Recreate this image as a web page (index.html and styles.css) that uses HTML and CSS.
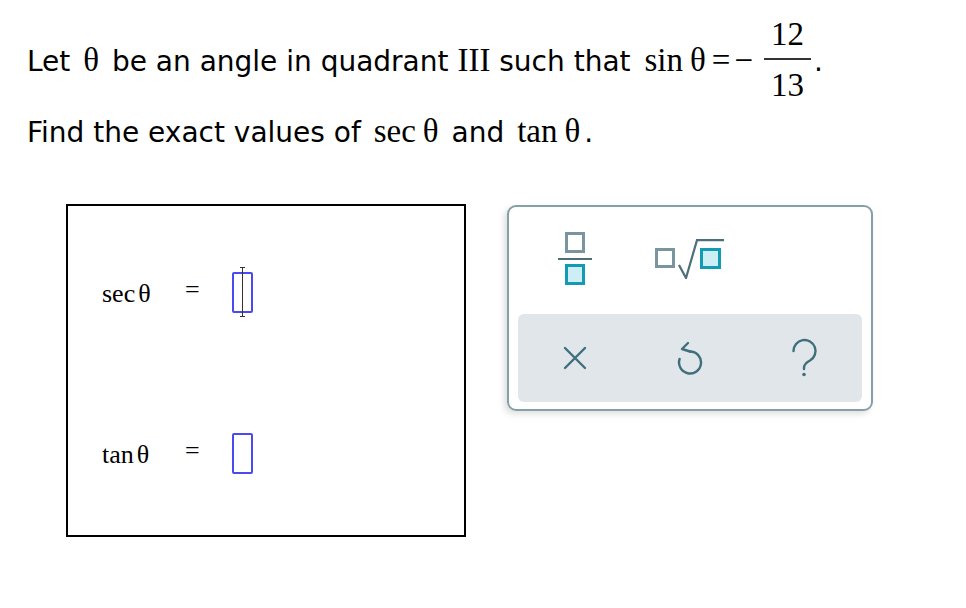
FILE: index.html
```html
<!DOCTYPE html>
<html>
<head>
<meta charset="utf-8">
<link rel="stylesheet" href="styles.css">
</head>
<body>
<div class="page">
  <p class="q q1">Let <span class="m pad">θ</span> be an angle in quadrant <span class="m">III</span> such that <span class="m lead">sin<span class="th">θ</span><span class="op">=</span><span class="op minus">−</span><span class="frac"><span class="num">12</span><span class="bar"></span><span class="den">13</span></span></span>.</p>
  <p class="q q2">Find the exact values of <span class="m pad">sec<span class="th">θ</span></span> and <span class="m pad">tan<span class="th">θ</span></span>.</p>
  <div class="work">
    <div class="answers">
      <div class="row">
        <span class="lbl">sec<span class="th-s">θ</span></span>
        <span class="eq">=</span>
        <span class="slot"><span class="caret"></span></span>
      </div>
      <div class="row">
        <span class="lbl">tan<span class="th-s">θ</span></span>
        <span class="eq">=</span>
        <span class="slot"></span>
      </div>
    </div>
    <div class="keypad">
      <div class="keys-top">
        <div class="key">
          <svg width="34" height="53" viewBox="0 0 34 53">
            <rect x="8.5" y="1.5" width="17" height="18" fill="#fff" stroke="#7a959d" stroke-width="3"/>
            <rect x="0" y="26" width="34" height="2" fill="#4d6f7a"/>
            <rect x="8.5" y="33.5" width="17" height="18" fill="#cdeef4" stroke="#139bb5" stroke-width="3"/>
          </svg>
        </div>
        <div class="key">
          <svg width="70" height="40" viewBox="0 0 70 40">
            <rect x="1.5" y="10.5" width="17" height="17" fill="#fff" stroke="#7a959d" stroke-width="3"/>
            <polyline points="24,26 31,39 42,1.2 69,1.2" fill="none" stroke="#4d6f7a" stroke-width="2.2" stroke-linejoin="miter"/>
            <rect x="46.5" y="10.5" width="18" height="18" fill="#cdeef4" stroke="#139bb5" stroke-width="3"/>
          </svg>
        </div>
        <div class="key"></div>
      </div>
      <div class="keys-bottom">
        <div class="key">
          <svg width="26" height="26" viewBox="0 0 26 26">
            <path d="M3 3 L23 23 M23 3 L3 23" fill="none" stroke="#3f6f7c" stroke-width="2.4" stroke-linecap="round"/>
          </svg>
        </div>
        <div class="key">
          <svg width="28" height="34" viewBox="0 0 28 34">
            <path d="M12 2 L6 8 L14 10.5" fill="none" stroke="#3f6f7c" stroke-width="2.4" stroke-linecap="round" stroke-linejoin="round"/>
            <path d="M14 10.5 A11 11 0 1 1 3.6 18" fill="none" stroke="#3f6f7c" stroke-width="2.4" stroke-linecap="round"/>
          </svg>
        </div>
        <div class="key">
          <svg width="28" height="40" viewBox="0 0 28 40">
            <path d="M2.5 13 A11 11 0 1 1 19 22.5 Q13 25.5 13 30 V31" fill="none" stroke="#3f6f7c" stroke-width="2.4" stroke-linecap="round"/>
            <circle cx="13" cy="36.5" r="1.8" fill="#3f6f7c"/>
          </svg>
        </div>
      </div>
    </div>
  </div>
</div>
</body>
</html>
```
FILE: styles.css
```css
body {
  margin: 0;
  background: #fff;
  color: #000;
  font-family: "DejaVu Sans", Verdana, sans-serif;
}

.page {
  padding-top: 19px;
}

.q {
  margin: 0;
  padding-left: 27px;
  font-size: 28px;
  line-height: 32px;
  white-space: nowrap;
}

.q2 {
  margin-top: 15px;
  height: 34px;
}

.m {
  font-family: "Liberation Serif", "Times New Roman", serif;
  font-size: 33px;
}

.pad {
  padding: 0 4px;
}

.lead {
  padding-left: 5px;
}

.th {
  margin-left: 7px;
}

.op {
  margin-left: 6px;
}

.minus {
  margin-left: 4px;
}

.frac {
  display: inline-block;
  vertical-align: -25px;
  text-align: center;
  margin-left: 11px;
  margin-right: 3px;
}

.num,
.den {
  display: block;
  line-height: 30px;
  padding: 0 7px;
}

.num {
  padding-bottom: 9px;
}

.bar {
  display: block;
  height: 2px;
  background: #333;
}

.den {
  margin-top: 10px;
}

.work {
  display: flex;
  align-items: flex-start;
  gap: 41px;
  margin-top: 55px;
  padding-left: 66px;
}

.answers {
  box-sizing: border-box;
  width: 400px;
  height: 333px;
  border: 2px solid #000;
  padding: 65px 0 0 34px;
  display: flex;
  flex-direction: column;
  gap: 120px;
}

.row {
  display: grid;
  grid-template-columns: 83px 47px auto;
  align-items: center;
  height: 41px;
}

.lbl {
  font-family: "Liberation Serif", "Times New Roman", serif;
  font-size: 26px;
  line-height: 41px;
  padding-top: 2px;
}

.th-s {
  margin-left: 3px;
}

.eq {
  font-family: "Liberation Serif", "Times New Roman", serif;
  font-size: 26px;
  line-height: 41px;
  margin-top: -6px;
}

.slot {
  position: relative;
  box-sizing: border-box;
  width: 21px;
  height: 41px;
  border: 2px solid #4a4af4;
  border-radius: 2px;
}

.caret {
  position: absolute;
  left: 8px;
  top: -7px;
  width: 1px;
  height: 50px;
  background: #333;
}

.caret::before,
.caret::after {
  content: "";
  position: absolute;
  left: -2px;
  width: 5px;
  height: 1px;
  background: #333;
}

.caret::before {
  top: 0;
}

.caret::after {
  bottom: 0;
}

.keypad {
  box-sizing: border-box;
  width: 366px;
  height: 206px;
  margin-top: 1px;
  border: 2px solid #86a0a8;
  border-radius: 9px;
  box-shadow: -3px 3px 6px rgba(0, 0, 0, 0.13);
  padding: 0 9px 7px 9px;
  display: flex;
  flex-direction: column;
}

.keys-top {
  height: 107px;
  display: grid;
  grid-template-columns: repeat(3, 1fr);
  align-items: center;
  justify-items: center;
  padding-bottom: 4px;
  box-sizing: border-box;
}

.keys-bottom {
  height: 88px;
  background: #e0e6e9;
  border-radius: 6px;
  display: grid;
  grid-template-columns: repeat(3, 1fr);
  align-items: center;
  justify-items: center;
}

.key {
  display: flex;
  align-items: center;
  justify-content: center;
}

.key svg {
  display: block;
}
```
